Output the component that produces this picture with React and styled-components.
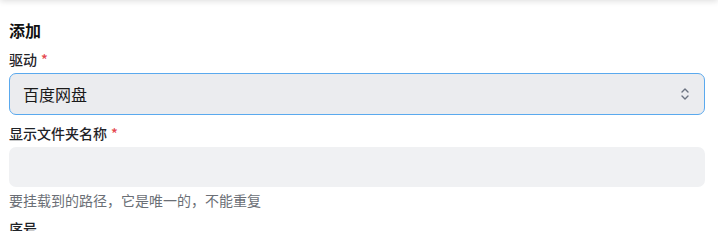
import React from "react";
import styled, { createGlobalStyle } from "styled-components";

const Global = createGlobalStyle`
  html, body { margin: 0; padding: 0; background: #fff; }
  body { font-family: "Noto Sans CJK SC", "Noto Sans", sans-serif; color: #111827; }
`;

const Page = styled.div`
  position: relative;
  padding: 18px 13px 0 9px;
  height: 231px;
  box-sizing: border-box;
  overflow: hidden;
  &::before {
    content: "";
    position: absolute;
    left: 0; right: 0; top: -10px; height: 10px;
    box-shadow: 0 1px 6px rgba(0,0,0,0.14);
  }
`;

const Title = styled.h2`
  margin: 0 0 7px;
  font-size: 16px;
  line-height: 24px;
  font-weight: 700;
  color: #111;
`;

const Label = styled.div`
  font-size: 14px;
  line-height: 20px;
  font-weight: 500;
  color: #1f2328;
  margin-top: ${p => p.$mt || 0}px;
  margin-bottom: 4px;
`;

const Star = styled.span`
  color: #e5484d;
  margin-left: 4px;
`;

const Select = styled.div`
  height: 42px;
  box-sizing: border-box;
  border: 1px solid #5aa9ee;
  border-radius: 7px;
  background: #ebecef;
  display: flex;
  align-items: center;
  justify-content: space-between;
  padding: 0 14px 0 13px;
  font-size: 16px;
  color: #1a1a1a;
`;

const Input = styled.div`
  height: 40px;
  border-radius: 7px;
  background: #f0f1f3;
`;

const Help = styled.div`
  font-size: 14px;
  line-height: 20px;
  color: #6b6f76;
  margin-top: 3px;
`;

const Chevrons = () => (
  <svg width="10" height="16" viewBox="0 0 10 16" fill="none" stroke="#6b7280" strokeWidth="1.4" strokeLinecap="round" strokeLinejoin="round">
    <path d="M2 6 L5 3 L8 6" />
    <path d="M2 10 L5 13 L8 10" />
  </svg>
);

export default function App() {
  return (
    <>
      <Global />
      <Page>
        <Title>添加</Title>
        <Label>驱动<Star>*</Star></Label>
        <Select>
          <span>百度网盘</span>
          <Chevrons />
        </Select>
        <Label $mt={8}>显示文件夹名称<Star>*</Star></Label>
        <Input />
        <Help>要挂载到的路径，它是唯一的，不能重复</Help>
        <Label $mt={8}>序号</Label>
      </Page>
    </>
  );
}
